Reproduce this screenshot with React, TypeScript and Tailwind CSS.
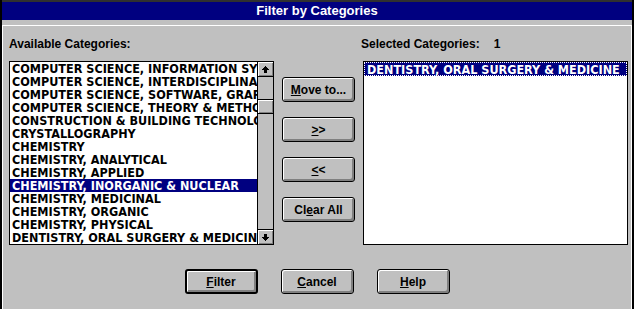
import type { ReactNode } from "react";

const available = [
  "COMPUTER SCIENCE, INFORMATION SYSTEMS",
  "COMPUTER SCIENCE, INTERDISCIPLINARY APPLICATIONS",
  "COMPUTER SCIENCE, SOFTWARE, GRAPHICS, PROGRAMMING",
  "COMPUTER SCIENCE, THEORY & METHODS",
  "CONSTRUCTION & BUILDING TECHNOLOGY",
  "CRYSTALLOGRAPHY",
  "CHEMISTRY",
  "CHEMISTRY, ANALYTICAL",
  "CHEMISTRY, APPLIED",
  "CHEMISTRY, INORGANIC & NUCLEAR",
  "CHEMISTRY, MEDICINAL",
  "CHEMISTRY, ORGANIC",
  "CHEMISTRY, PHYSICAL",
  "DENTISTRY, ORAL SURGERY & MEDICINE",
];

const listFont = "font-['Liberation_Sans_Narrow','DejaVu_Sans_Condensed',sans-serif] font-bold text-[12.5px] leading-[13px]";

function Arrow({ down }: { down?: boolean }) {
  return (
    <svg width="7" height="7" viewBox="0 0 7 7" className={down ? "rotate-180" : ""} shapeRendering="crispEdges">
      <path d="M3.5 0L7 4H5V7H2V4H0Z" fill="#000" />
    </svg>
  );
}

function Btn({ children, def }: { children: ReactNode; def?: boolean }) {
  return (
    <button
      className={
        def
          ? "flex h-[25px] w-[73px] items-center justify-center rounded-[3px] border-2 border-black bg-[#c0c0c0] text-[12px] font-bold text-black shadow-[inset_1px_1px_0_#fff,inset_-2px_-2px_0_#808080]"
          : "flex h-[25px] w-[73px] items-center justify-center rounded-[3px] border border-black bg-[#c0c0c0] text-[12px] font-bold text-black shadow-[inset_1px_1px_0_#fff,inset_-2px_-2px_0_#808080]"
      }
    >
      {children}
    </button>
  );
}

export default function App() {
  return (
    <div className="flex h-[309px] w-[634px] flex-col overflow-hidden border-x-2 border-black bg-[#c0c0c0] font-['Liberation_Sans',Arial,sans-serif]">
      <div className="flex h-[20px] shrink-0 items-center justify-center border-t-2 border-[#303030] bg-[#000080] text-[13px] font-bold text-white">
        Filter by Categories
      </div>
      <div className="mt-[5px] flex flex-1 flex-col border-x border-t border-white pl-[6px]">
        <div className="mt-[11px] flex h-[15px] text-[12px] font-bold leading-[15px] text-black">
          <div className="w-[352px]">Available Categories:</div>
          <div>
            Selected Categories:<span className="ml-[14px]">1</span>
          </div>
        </div>
        <div className="mt-[9px] flex gap-[8px]">
          {/* left list */}
          <div className="flex h-[184px] w-[265px] border border-black bg-white">
            <div className={`flex-1 overflow-hidden ${listFont}`}>
              {available.map((c, i) => (
                <div
                  key={c}
                  className={
                    i === 9
                      ? "h-[13px] whitespace-nowrap bg-[#000080] pl-[2px] text-white"
                      : "h-[13px] whitespace-nowrap pl-[2px] text-black"
                  }
                >
                  {c}
                </div>
              ))}
            </div>
            <div className="flex w-[16px] flex-col border-l border-black bg-[#c0c0c0]">
              <div className="flex h-[15px] items-center justify-center border-b border-black shadow-[inset_1px_1px_0_#fff,inset_-1px_-1px_0_#808080]">
                <Arrow />
              </div>
              <div className="h-[22px]" />
              <div className="h-[15px] border-y border-black shadow-[inset_1px_1px_0_#fff,inset_-1px_-1px_0_#808080]" />
              <div className="flex-1" />
              <div className="flex h-[15px] items-center justify-center border-t border-black shadow-[inset_1px_1px_0_#fff,inset_-1px_-1px_0_#808080]">
                <Arrow down />
              </div>
            </div>
          </div>
          {/* middle buttons */}
          <div className="flex flex-col gap-[15px] pt-[16px]">
            <Btn>
              <span>
                <u>M</u>ove to...
              </span>
            </Btn>
            <Btn>
              <span>
                <u>&gt;</u>&gt;
              </span>
            </Btn>
            <Btn>
              <span>
                <u>&lt;</u>&lt;
              </span>
            </Btn>
            <Btn>
              <span>
                Cl<u>e</u>ar All
              </span>
            </Btn>
          </div>
          {/* right list */}
          <div className={`h-[184px] w-[265px] border border-black bg-white ${listFont}`}>
            <div className="h-[14px] whitespace-nowrap border border-dotted border-white bg-[#000080] pl-[2px] text-white">
              DENTISTRY, ORAL SURGERY &amp; MEDICINE
            </div>
          </div>
        </div>
        <div className="mt-[24px] flex justify-center gap-[23px] pr-[6px]">
          <Btn def>
            <span>
              <u>F</u>ilter
            </span>
          </Btn>
          <Btn>
            <span>
              <u>C</u>ancel
            </span>
          </Btn>
          <Btn>
            <span>
              <u>H</u>elp
            </span>
          </Btn>
        </div>
      </div>
    </div>
  );
}
